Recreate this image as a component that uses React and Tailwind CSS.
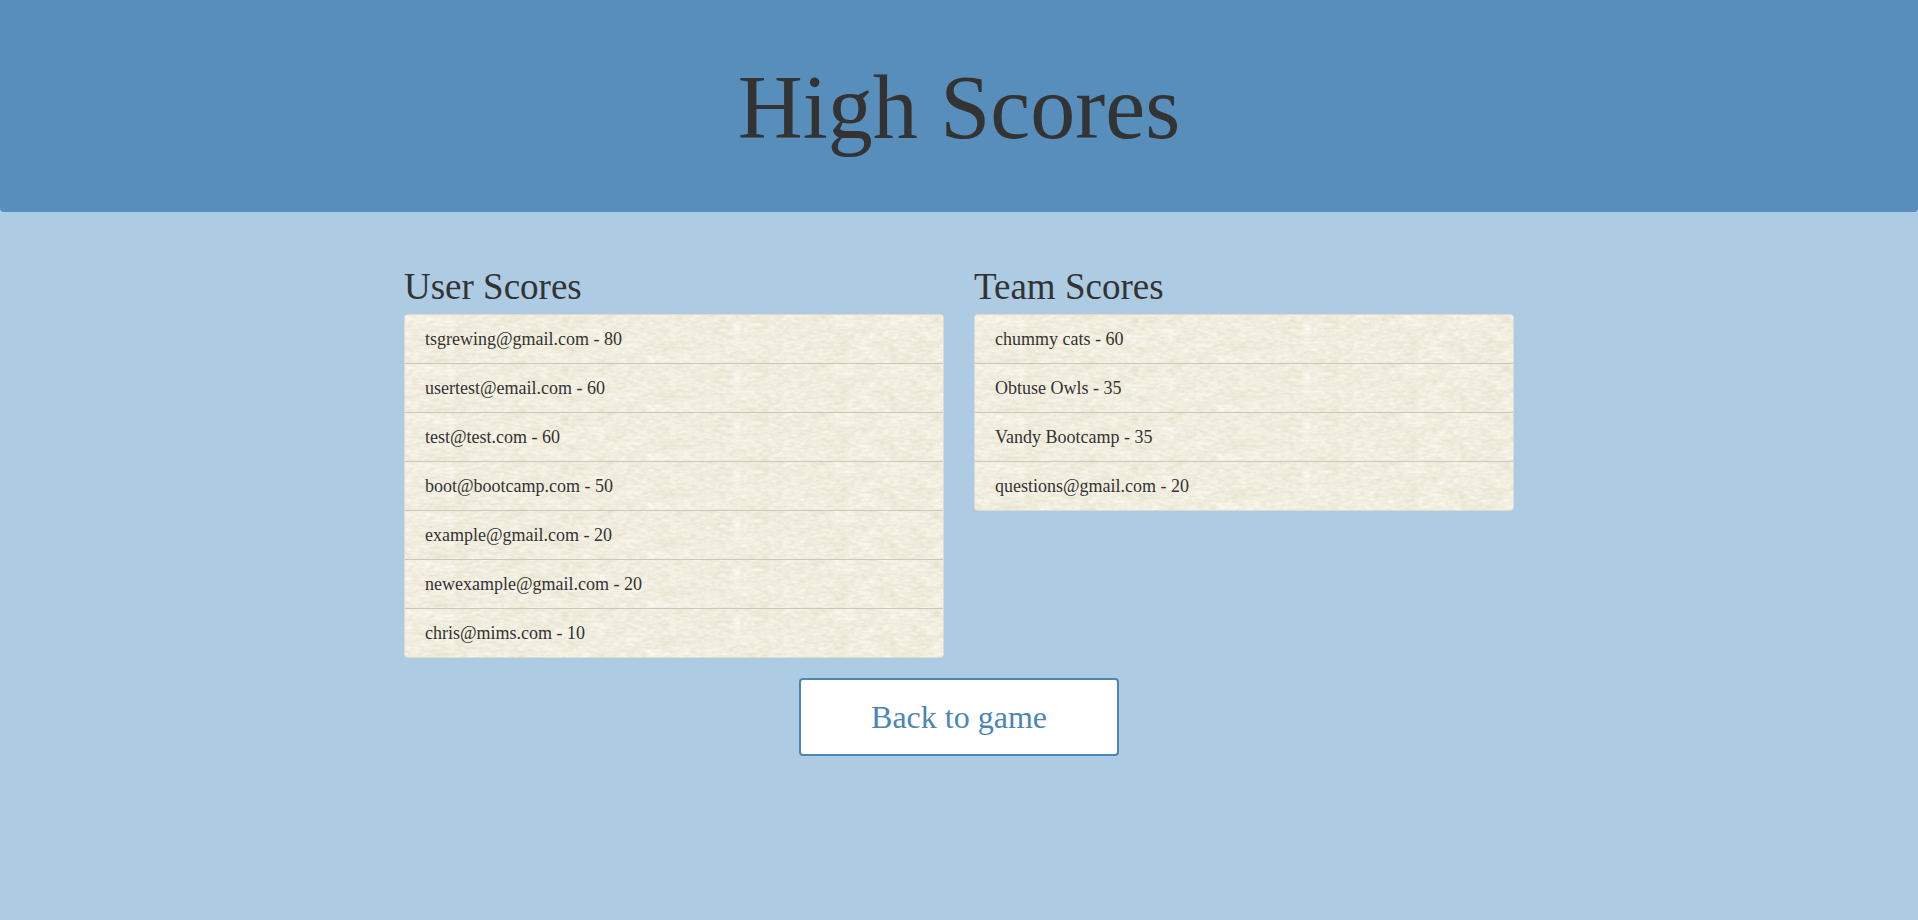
const userScores = [
  ["tsgrewing@gmail.com", 80],
  ["usertest@email.com", 60],
  ["test@test.com", 60],
  ["boot@bootcamp.com", 50],
  ["example@gmail.com", 20],
  ["newexample@gmail.com", 20],
  ["chris@mims.com", 10],
];

const teamScores = [
  ["chummy cats", 60],
  ["Obtuse Owls", 35],
  ["Vandy Bootcamp", 35],
  ["questions@gmail.com", 20],
];

// Defines the fibrous paper grain shared by every row: soft mottling under a fine fibre layer.
function PaperFilter() {
  return (
    <svg className="absolute h-0 w-0" aria-hidden="true">
      <filter id="paper" x="0" y="0" width="100%" height="100%" colorInterpolationFilters="sRGB">
        <feTurbulence type="fractalNoise" baseFrequency="0.04 0.08" numOctaves="4" seed="8" />
        <feColorMatrix
          type="matrix"
          values="0.1 0 0 0 0.895  0.13 0 0 0 0.867  0.2 0 0 0 0.775  0 0 0 0 1"
          result="mottle"
        />
        <feTurbulence type="fractalNoise" baseFrequency="0.14 0.34" numOctaves="3" seed="3" />
        <feColorMatrix
          type="matrix"
          values="0.16 0 0 0 0.865  0.2 0 0 0 0.832  0.28 0 0 0 0.735  0 0 0 0 1"
          result="fibre"
        />
        <feComposite in="mottle" in2="fibre" operator="arithmetic" k1="0" k2="0.5" k3="0.5" k4="0" />
      </filter>
    </svg>
  );
}

function ScoreList({ title, scores }) {
  return (
    <section>
      <h2 className="mb-[7px] text-[37px] leading-10 text-[#333333]">{title}</h2>
      <ul className="overflow-hidden rounded border border-[#dedad2] bg-[#f3eee0]">
        {scores.map(([name, score]) => (
          <li
            key={name}
            className="relative isolate border-b border-[#cdc7b8] px-5 py-3 text-[18px] leading-6 text-[#333333] last:border-b-0"
          >
            <svg className="absolute inset-0 -z-10 h-full w-full" aria-hidden="true">
              <rect width="100%" height="100%" filter="url(#paper)" />
            </svg>
            {name} - {score}
          </li>
        ))}
      </ul>
    </section>
  );
}

export default function App() {
  return (
    <div className="min-h-screen bg-[#adcbe3] pb-12 font-['Liberation_Serif',serif]">
      <PaperFilter />
      <header className="rounded-b bg-[#588ebb] px-4 pt-[58px] pb-[54px] text-center">
        <h1 className="text-[90px] leading-[100px] text-[#333333]">High Scores</h1>
      </header>
      <main className="mx-auto max-w-[1142px] px-4 pt-[55px]">
        <div className="grid items-start gap-[30px] md:grid-cols-2">
          <ScoreList title="User Scores" scores={userScores} />
          <ScoreList title="Team Scores" scores={teamScores} />
        </div>
        <div className="mt-5 flex justify-center">
          <button
            type="button"
            className="w-80 rounded border-2 border-[#4b86b4] bg-white py-[17px] text-[32px] leading-10 text-[#4b86b4]"
          >
            Back to game
          </button>
        </div>
      </main>
    </div>
  );
}
